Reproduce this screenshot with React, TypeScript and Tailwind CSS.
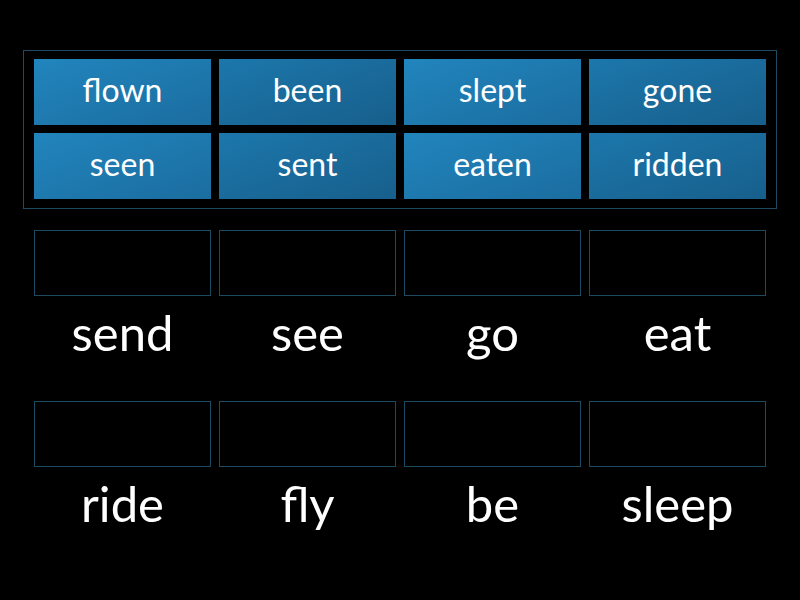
import React from "react";

const tiles = [
  { word: "flown", dark: false },
  { word: "been", dark: true },
  { word: "slept", dark: false },
  { word: "gone", dark: true },
  { word: "seen", dark: false },
  { word: "sent", dark: true },
  { word: "eaten", dark: false },
  { word: "ridden", dark: true },
];

const rows = [
  ["send", "see", "go", "eat"],
  ["ride", "fly", "be", "sleep"],
];

const App: React.FC = () => {
  return (
    <div
      className="w-[800px] h-[600px] bg-black overflow-hidden pt-[50px]"
      style={{ fontFamily: "Lato, 'Open Sans', sans-serif" }}
    >
      {/* Answer tiles */}
      <div className="mx-[23px] border border-[#1d4a61] px-[10px] pt-[8px] pb-[9px]">
        <div className="grid grid-cols-[repeat(4,177px)] gap-[8px]">
          {tiles.map((t) => (
            <div
              key={t.word}
              className={
                t.dark
                  ? "h-[66px] flex items-center justify-center bg-gradient-to-br from-[#1c77ab] to-[#175f8c] text-white text-[32px] pb-[4px]"
                  : "h-[66px] flex items-center justify-center bg-gradient-to-br from-[#2185bd] to-[#1b6d9f] text-white text-[32px] pb-[4px]"
              }
            >
              {t.word}
            </div>
          ))}
        </div>
      </div>

      {/* Drop targets */}
      <div className="mt-[21px] px-[34px]">
        {rows.map((row, i) => (
          <div key={i} className="grid grid-cols-[repeat(4,177px)] gap-[8px] h-[171px]">
            {row.map((w) => (
              <div key={w} className="flex flex-col">
                <div className="h-[66px] border border-[#1d4a61]" />
                <div className="h-[74px] flex items-center justify-center text-white text-[49px] leading-none pb-[2px]">
                  {w}
                </div>
              </div>
            ))}
          </div>
        ))}
      </div>
    </div>
  );
};

export default App;
